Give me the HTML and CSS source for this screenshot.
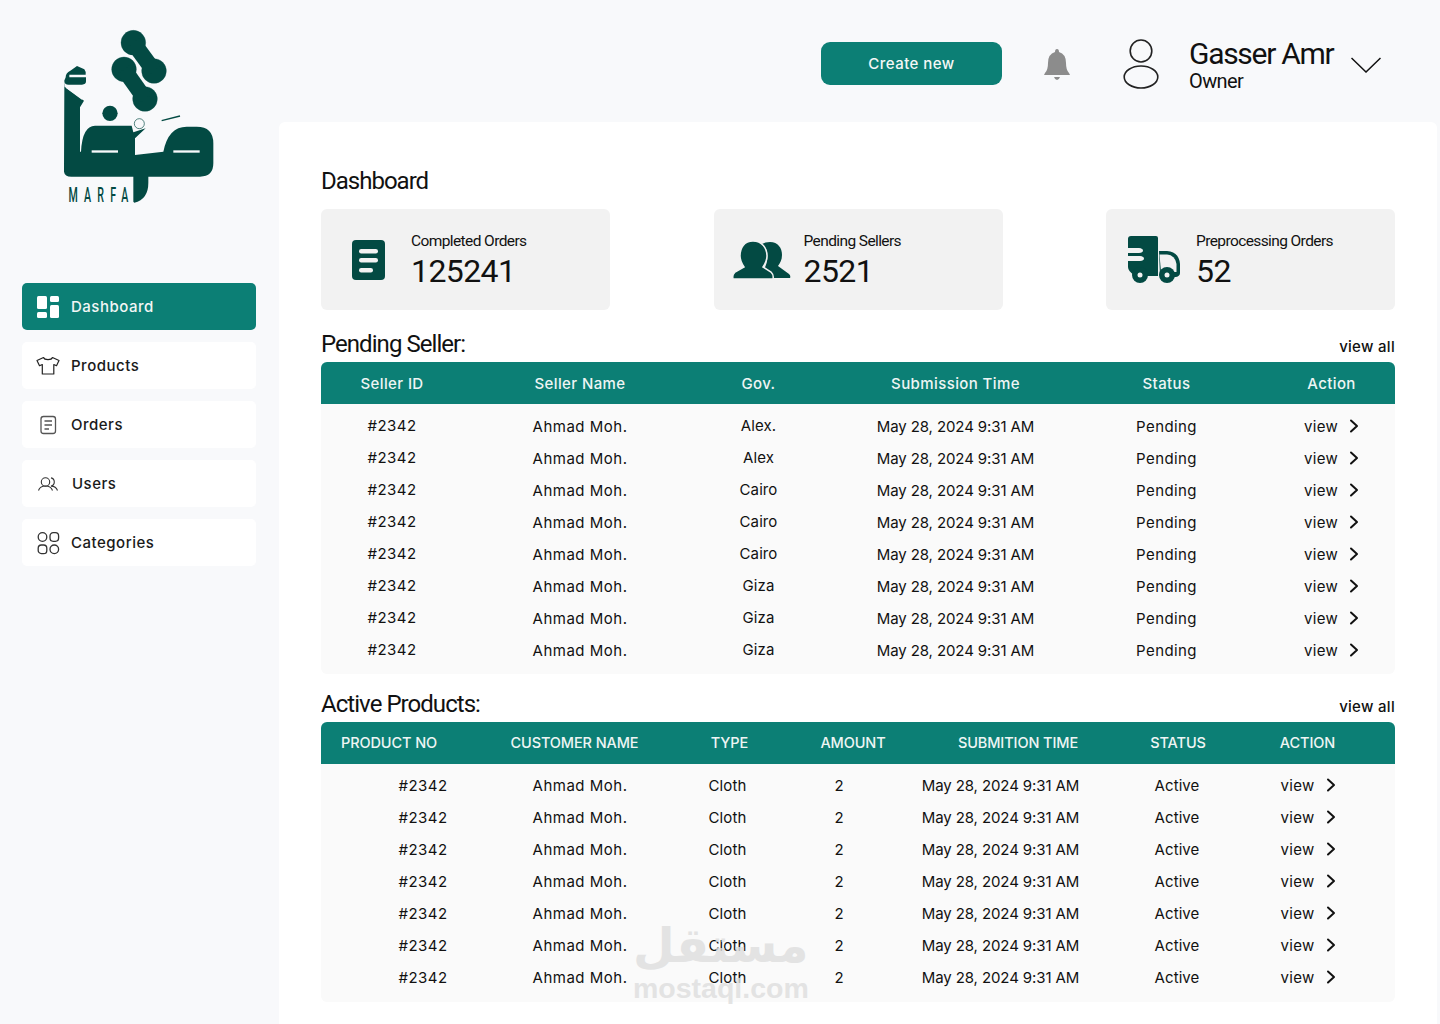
FILE: index.html
```html
<!DOCTYPE html>
<html lang="en">
<head>
<meta charset="utf-8">
<title>Marfa Dashboard</title>
<link rel="stylesheet" href="styles.css">
</head>
<body>
<svg class="defs" width="0" height="0" aria-hidden="true">
  <symbol id="chev" viewBox="0 0 10 14"><path d="M2 1.5 8 7l-6 5.500" fill="none" stroke="#111" stroke-width="2" stroke-linecap="round" stroke-linejoin="round"/></symbol>
</svg>
<div class="app">
  <aside class="sidebar">
    <div class="logo">
      <svg width="280" height="230" viewBox="0 0 840 690">
        <g fill="#034a43" stroke="#034a43">
          <circle cx="400" cy="128" r="37"/><circle cx="462" cy="213" r="37"/><path d="M400 128 462 213" stroke-width="48"/>
        </g>
        <g fill="#f8f9fb" stroke="#f8f9fb">
          <circle cx="372" cy="208" r="41"/><circle cx="435" cy="297" r="41"/><path d="M372 208 435 297" stroke-width="54"/>
        </g>
        <g fill="#034a43" stroke="#034a43">
          <circle cx="372" cy="208" r="37"/><circle cx="435" cy="297" r="37"/><path d="M372 208 435 297" stroke-width="48"/>
        </g>
        <circle cx="330" cy="340" r="23" fill="#034a43"/>
        <path fill="#034a43" d="M197 232q0-14 14-20l20-14 22 10q6 8 4 16H208v8h50v12q0 10-12 10h-40q-13 0-13-12z"/>
        <path fill="#034a43" d="M193 235v25l-1 255q2 15 22 15h186v75l3 3q42-10 42-60v-18h155q40 0 40-40v-60q0-50-50-50h-30q-55 0-70 75l-85 10v-50l32-30-37 12-5-20H285q-38 0-42 78h-3V322l12-20-58-42z"/>
        <path d="M198 262 247 298" stroke="#f8f9fb" stroke-width="4" fill="none"/>
        <rect x="275" y="451" width="79" height="7" fill="#f8f9fb"/>
        <rect x="520" y="451" width="79" height="7" fill="#f8f9fb"/>
        <circle cx="418" cy="371" r="15" fill="#f8f9fb" stroke="#034a43" stroke-width="2"/>
        <path d="M485 362 540 348" stroke="#034a43" stroke-width="4"/>
        <text class="logo-word" transform="scale(.55 1)" x="373" y="606" textLength="327" lengthAdjust="spacing">MARFA</text>
      </svg>
    </div>
    <nav class="nav">
      <a class="nav-item active">
        <svg class="nav-icon" viewBox="0 0 24 24"><g fill="#fff"><rect x="1" y="1" width="10" height="13" rx="1.500"/><rect x="1" y="17" width="10" height="6" rx="1.500"/><rect x="14" y="1" width="9" height="6" rx="1.500"/><rect x="14" y="10" width="9" height="13" rx="1.500"/></g></svg>
        Dashboard
      </a>
      <a class="nav-item">
        <svg class="nav-icon" viewBox="0 0 24 24"><path d="M7.500 3.500 1 6.500l2.500 5.200 2.800-1.200V20h11.500V10.500l2.700 1.200L23 6.500l-6.500-3c-1 2.800-8 2.800-9 0z" fill="none" stroke="#222" stroke-width="1.200" stroke-linejoin="round"/></svg>
        Products
      </a>
      <a class="nav-item">
        <svg class="nav-icon" viewBox="0 0 24 24"><rect x="5" y="3.500" width="14.500" height="17" rx="2.500" fill="none" stroke="#555" stroke-width="1.300"/><path d="M8.500 8h7.500M8.500 12h7.500M8.500 16h4.500" stroke="#555" stroke-width="1.300"/></svg>
        Orders
      </a>
      <a class="nav-item users">
        <svg class="nav-icon" viewBox="0 0 24 24"><g fill="none" stroke="#333" stroke-width="1.100"><circle cx="9.500" cy="10" r="4.200"/><path d="M2.500 18.500c1-3 3.500-4.500 7-4.500s6 1.500 7 4.500M15 5.900a4.200 4.200 0 0 1 0 8.200c3.300 0 5.500 1.500 6.500 4.400"/></g></svg>
        Users
      </a>
      <a class="nav-item">
        <svg class="nav-icon" viewBox="0 0 24 24"><g fill="none" stroke="#333" stroke-width="1.300"><circle cx="6.500" cy="6" r="4.300"/><rect x="14" y="1.700" width="8.600" height="8.600" rx="3.200"/><rect x="2.200" y="14" width="8.600" height="8.600" rx="3.200"/><circle cx="18.300" cy="18.300" r="4.300"/></g></svg>
        Categories
      </a>
    </nav>
  </aside>
  <div class="content">
    <header class="topbar">
      <button class="create">Create new</button>
      <svg class="bell" width="30" height="34" viewBox="0 0 30 34"><path d="M15 2q2 0 2 3 7 2 7 11 0 7 3 10l1 2H2l1-2q3-3 3-10 0-9 7-11 0-3 2-3z" fill="#8c8c8c"/><path d="M12 30h6q-1 3-3 3t-3-3z" fill="#8c8c8c"/></svg>
      <svg class="avatar" width="38" height="52" viewBox="0 0 38 52"><g fill="none" stroke="#222" stroke-width="1.600"><ellipse cx="19" cy="12" rx="10.800" ry="11"/><ellipse cx="19" cy="38" rx="16.800" ry="11"/></g></svg>
      <div class="who">
        <div class="who-name">Gasser Amr</div>
        <div class="who-role">Owner</div>
      </div>
      <svg class="caret" width="30" height="16" viewBox="0 0 30 16"><path d="M.5 1 15 15 29.500 1" fill="none" stroke="#111" stroke-width="1.500"/></svg>
    </header>
    <main class="panel">
      <h1 class="page-title">Dashboard</h1>
      <section class="cards">
        <div class="card">
          <div class="card-icon"><svg width="34" height="40" viewBox="0 0 34 40"><rect width="33" height="40" rx="4" fill="#034a43"/><g fill="#f2f2f2"><rect x="7" y="9" width="19" height="4.500" rx="2.200"/><rect x="7" y="18" width="19" height="4.500" rx="2.200"/><rect x="7" y="28" width="14" height="4.500" rx="2.200"/></g></svg></div>
          <div class="card-text"><div class="card-label">Completed Orders</div><div class="card-num">125241</div></div>
        </div>
        <div class="card">
          <div class="card-icon"><svg width="56" height="36" viewBox="0 0 56 36"><path fill="#034a43" d="M36 0c8 0 12 6 12 13 0 5-2 8-4 11l11 8q2 2 1 4H38c-1-3-4-6-8-9 3-5 4-10 3-17-1-4-3-6-5-8q3-2 8-2z"/><path fill="#034a43" stroke="#f2f2f2" stroke-width="1.500" d="M19-1c9 0 14 7 14 15 0 5-2 8-4 11l8 5q3 3 2 7H-1q-1-4 2-7l9-5c-2-3-4-6-4-11C6 6 10-1 19-1z"/></svg></div>
          <div class="card-text"><div class="card-label">Pending Sellers</div><div class="card-num">2521</div></div>
        </div>
        <div class="card">
          <div class="card-icon"><svg width="52" height="48" viewBox="0 0 52 48"><path fill="#034a43" d="M3 0h25q2 0 2 2v38H18a8 8 0 0 0-12-1q-6-4-6-8v-6h12q4-.5 4-2.500T12 20H0v-3h11q4-.5 4-2.500T11 12H0V3q0-3 3-3z"/><path fill="#034a43" d="M31 15h8q12 1 13 13v9q0 3-4 4h-2a8 8 0 0 0-14-1z"/><path fill="#f2f2f2" d="M31.500 18.500H39q8 .5 9.500 9.500v8H33z"/><circle cx="12" cy="39" r="8" fill="#034a43"/><circle cx="39" cy="39" r="8" fill="#034a43"/><circle cx="12" cy="39" r="2.500" fill="#f2f2f2"/><circle cx="39" cy="39" r="2.500" fill="#f2f2f2"/></svg></div>
          <div class="card-text"><div class="card-label">Preprocessing Orders</div><div class="card-num">52</div></div>
        </div>
      </section>

      <div class="sec-head first"><h2 class="sec-title">Pending Seller:</h2><a class="view-all">view all</a></div>
      <section class="table sellers">
        <div class="thead"><span>Seller ID</span><span>Seller Name</span><span>Gov.</span><span>Submission Time</span><span>Status</span><span class="act-h">Action</span></div>
        <div class="tbody">
          <div class="row"><span>#2342</span><span>Ahmad Moh.</span><span>Alex.</span><span>May 28, 2024 9:31 AM</span><span>Pending</span><span class="act">view <svg class="chev"><use href="#chev"/></svg></span></div>
          <div class="row"><span>#2342</span><span>Ahmad Moh.</span><span>Alex</span><span>May 28, 2024 9:31 AM</span><span>Pending</span><span class="act">view <svg class="chev"><use href="#chev"/></svg></span></div>
          <div class="row"><span>#2342</span><span>Ahmad Moh.</span><span>Cairo</span><span>May 28, 2024 9:31 AM</span><span>Pending</span><span class="act">view <svg class="chev"><use href="#chev"/></svg></span></div>
          <div class="row"><span>#2342</span><span>Ahmad Moh.</span><span>Cairo</span><span>May 28, 2024 9:31 AM</span><span>Pending</span><span class="act">view <svg class="chev"><use href="#chev"/></svg></span></div>
          <div class="row"><span>#2342</span><span>Ahmad Moh.</span><span>Cairo</span><span>May 28, 2024 9:31 AM</span><span>Pending</span><span class="act">view <svg class="chev"><use href="#chev"/></svg></span></div>
          <div class="row"><span>#2342</span><span>Ahmad Moh.</span><span>Giza</span><span>May 28, 2024 9:31 AM</span><span>Pending</span><span class="act">view <svg class="chev"><use href="#chev"/></svg></span></div>
          <div class="row"><span>#2342</span><span>Ahmad Moh.</span><span>Giza</span><span>May 28, 2024 9:31 AM</span><span>Pending</span><span class="act">view <svg class="chev"><use href="#chev"/></svg></span></div>
          <div class="row"><span>#2342</span><span>Ahmad Moh.</span><span>Giza</span><span>May 28, 2024 9:31 AM</span><span>Pending</span><span class="act">view <svg class="chev"><use href="#chev"/></svg></span></div>
        </div>
      </section>

      <div class="sec-head second"><h2 class="sec-title">Active Products:</h2><a class="view-all">view all</a></div>
      <section class="table products">
        <div class="thead"><span>PRODUCT NO</span><span>CUSTOMER NAME</span><span>TYPE</span><span>AMOUNT</span><span>SUBMITION TIME</span><span>STATUS</span><span>ACTION</span></div>
        <div class="tbody">
          <div class="row"><span>#2342</span><span>Ahmad Moh.</span><span>Cloth</span><span>2</span><span>May 28, 2024 9:31 AM</span><span>Active</span><span class="act">view <svg class="chev"><use href="#chev"/></svg></span></div>
          <div class="row"><span>#2342</span><span>Ahmad Moh.</span><span>Cloth</span><span>2</span><span>May 28, 2024 9:31 AM</span><span>Active</span><span class="act">view <svg class="chev"><use href="#chev"/></svg></span></div>
          <div class="row"><span>#2342</span><span>Ahmad Moh.</span><span>Cloth</span><span>2</span><span>May 28, 2024 9:31 AM</span><span>Active</span><span class="act">view <svg class="chev"><use href="#chev"/></svg></span></div>
          <div class="row"><span>#2342</span><span>Ahmad Moh.</span><span>Cloth</span><span>2</span><span>May 28, 2024 9:31 AM</span><span>Active</span><span class="act">view <svg class="chev"><use href="#chev"/></svg></span></div>
          <div class="row"><span>#2342</span><span>Ahmad Moh.</span><span>Cloth</span><span>2</span><span>May 28, 2024 9:31 AM</span><span>Active</span><span class="act">view <svg class="chev"><use href="#chev"/></svg></span></div>
          <div class="row"><span>#2342</span><span>Ahmad Moh.</span><span>Cloth</span><span>2</span><span>May 28, 2024 9:31 AM</span><span>Active</span><span class="act">view <svg class="chev"><use href="#chev"/></svg></span></div>
          <div class="row"><span>#2342</span><span>Ahmad Moh.</span><span>Cloth</span><span>2</span><span>May 28, 2024 9:31 AM</span><span>Active</span><span class="act">view <svg class="chev"><use href="#chev"/></svg></span></div>
        </div>
      </section>
      <div class="watermark" aria-hidden="true"><div class="wm-ar">مستقل</div><div class="wm-en">mostaql.com</div></div>
    </main>
  </div>
</div>
</body>
</html>
```
FILE: styles.css
```css
* { box-sizing: border-box; }
html, body { margin: 0; height: 1024px; overflow: hidden; }
body { background: #f8f9fb; color: #111; font-family: Inter, "Open Sans", sans-serif; font-size: 15px; }
.defs { position: absolute; }
.app { display: flex; width: 1440px; height: 1024px; }

.sidebar { width: 279px; flex: none; }
.logo { height: 283px; }
.logo svg { display: block; }
.logo-word { font-family: Roboto, sans-serif; font-weight: 500; font-size: 58px; fill: #034a43; }
.nav { display: flex; flex-direction: column; gap: 12px; width: 234px; margin-left: 22px; }
.nav-item { display: flex; align-items: center; gap: 11px; height: 47px; padding-left: 14px; background: #fff; border-radius: 5px; font-weight: 500; font-size: 15px; letter-spacing: .5px; color: #1a1a1a; }
.nav-item.active { background: #0c7f75; color: #f2f6f5; }
.nav-item.users { gap: 12px; }
.nav-icon { width: 24px; height: 24px; flex: none; }

.content { width: 1158px; display: flex; flex-direction: column; }
.topbar { height: 122px; display: flex; align-items: flex-start; padding-top: 42px; padding-left: 542px; }
.create { width: 181px; height: 43px; border: 0; border-radius: 9px; background: #0c7f75; color: #f4f8f7; font-family: Inter, sans-serif; font-size: 15px; font-weight: 500; letter-spacing: .45px; }
.bell { margin-left: 40px; margin-top: 5px; flex: none; }
.avatar { margin-left: 50px; margin-top: -3px; flex: none; }
.who { margin-left: 29px; margin-top: -6px; width: 162px; font-family: Roboto, sans-serif; }
.who-name { font-size: 30px; line-height: 36px; letter-spacing: -1.300px; }
.who-role { font-size: 20px; line-height: 18px; letter-spacing: -.600px; }
.caret { margin-top: 15px; flex: none; }

.panel { position: relative; width: 1158px; flex: 1; background: #fff; border-radius: 6px 6px 0 0; padding: 0 42px; font-size: 15px; }
.page-title { margin: 0; padding-top: 42px; height: 87px; font-family: Roboto, sans-serif; font-weight: 400; font-size: 24px; line-height: 34px; letter-spacing: -1px; color: #111; }
.cards { display: flex; justify-content: space-between; }
.card { width: 289px; height: 101px; display: flex; align-items: center; background: #f2f2f2; border-radius: 6px; }
.card-icon { width: 90px; flex: none; display: flex; justify-content: center; padding-left: 6px; }
.card-icon svg { display: block; overflow: visible; }
.card-text { font-family: Roboto, sans-serif; padding-top: 3px; }
.card-label { font-size: 15.500px; line-height: 20px; letter-spacing: -.600px; }
.card-num { font-size: 32px; line-height: 40px; letter-spacing: -.600px; }

.sec-head { display: flex; justify-content: space-between; align-items: flex-end; }
.sec-head.first { height: 52px; padding-bottom: 2px; }
.sec-head.second { height: 48px; padding-bottom: 2px; }
.sec-title { margin: 0; font-family: Roboto, sans-serif; font-weight: 400; font-size: 24px; line-height: 32px; letter-spacing: -.950px; }
.view-all { font-weight: 500; font-size: 15px; line-height: 22px; letter-spacing: .3px; margin-bottom: 2px; }

.thead { display: grid; align-items: center; height: 42px; background: #0c7f75; color: #eef5f4; border-radius: 6px 6px 0 0; font-weight: 500; text-align: center; letter-spacing: .4px; }
.tbody { background: #fafafa; border-radius: 0 0 6px 6px; }
.row { display: grid; align-items: center; height: 32px; text-align: center; font-weight: 400; letter-spacing: .1px; }
.row span:nth-child(1) { letter-spacing: .45px; }
.row span:nth-child(2) { letter-spacing: .5px; }
.act { display: flex; justify-content: center; align-items: center; gap: 11px; letter-spacing: .3px; }
.chev { width: 10px; height: 14px; }

.sellers .thead, .sellers .row { grid-template-columns: 142px 234px 123px 271px 151px 153px; }
.sellers .row span:nth-child(1), .sellers .row span:nth-child(3) { padding-bottom: 2px; }
.sellers .row span:nth-child(4) { letter-spacing: -.1px; }
.sellers .row span:nth-child(5) { letter-spacing: .4px; }
.sellers .tbody { padding: 6px 0 8px; }
.sellers .act, .act-h { padding-left: 26px; }
.products .thead { grid-template-columns: 136px 235px 75px 172px 158px 162px 97px 39px; font-size: 14.500px; letter-spacing: -.100px; padding-bottom: 2px; }
.products .row { grid-template-columns: 204px 110px 185px 38px 285px 68px 184px; }
.products .row span:nth-child(5) { letter-spacing: -.1px; }
.products .tbody { padding: 5px 0 9px; }
.products .act { padding-left: 10px; }

.watermark { position: absolute; left: 354px; top: 795px; width: 174px; text-align: center; color: #dedede; opacity: .8; font-weight: 700; pointer-events: none; }
.wm-ar { font-family: "DejaVu Sans", sans-serif; font-size: 48px; line-height: 56px; }
.wm-en { font-family: "Liberation Sans", sans-serif; font-size: 28.500px; line-height: 30px; }
```
